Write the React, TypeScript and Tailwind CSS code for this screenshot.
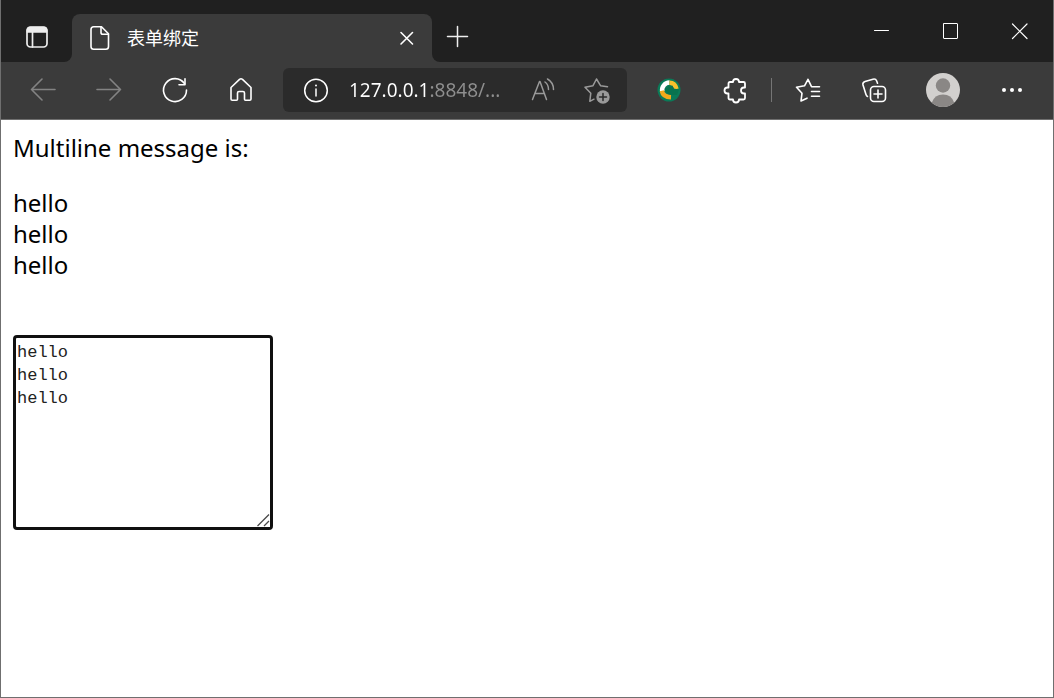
import { useState, type ReactNode } from 'react';

type IconProps = { children: ReactNode; width?: number };

function Icon({ children, width = 1.6 }: IconProps) {
  return (
    <svg
      className="size-7 shrink-0"
      viewBox="0 0 28 28"
      fill="none"
      stroke="currentColor"
      strokeWidth={width}
      strokeLinecap="round"
      strokeLinejoin="round"
      aria-hidden="true"
    >
      {children}
    </svg>
  );
}

type ToolButtonProps = { label: string; dim?: boolean; children: ReactNode };

function ToolButton({ label, dim = false, children }: ToolButtonProps) {
  return (
    <button
      type="button"
      aria-label={label}
      className={`flex h-11 w-[66px] shrink-0 items-center justify-center ${dim ? 'text-[#838383]' : 'text-white'}`}
    >
      {children}
    </button>
  );
}

function WindowButton({ label, children }: { label: string; children: ReactNode }) {
  return (
    <button type="button" aria-label={label} className="flex w-[69px] items-center justify-center text-white">
      {children}
    </button>
  );
}

function TitleBar() {
  return (
    <header className="flex h-[62px] bg-[#3b3b3b]">
      <div className="flex w-[71px] shrink-0 items-center justify-center rounded-br-lg bg-[#202020] pt-3">
        <button type="button" aria-label="Tab actions" className="text-[#eeeeee]">
          <Icon width={1.7}>
            <rect x="4" y="4" width="20" height="20" rx="3.5" />
            <path d="M4.5 9V7Q4.500 4.500 7 4.500H21Q23.500 4.500 23.500 7V9Z" fill="currentColor" />
            <path d="M9.500 9V24" />
          </Icon>
        </button>
      </div>
      <div className="flex min-w-0 shrink basis-[360px] bg-[#202020] pt-[14px]">
        <div className="flex min-w-0 flex-1 items-center rounded-t-lg bg-[#3b3b3b] pr-[11px] pl-[14px]">
          <span className="text-white">
            <Icon>
              <path d="M5 5.500Q5 2.800 7.700 2.800H15.500L22.500 9.800V22.500Q22.500 25.200 19.800 25.200H7.700Q5 25.200 5 22.500Z" />
              <path d="M15 3V8.500Q15 10.300 16.800 10.300H22.300" />
            </Icon>
          </span>
          <span className="ml-[13px] flex-1 truncate text-lg leading-6 text-white">表单绑定</span>
          <button type="button" aria-label="Close tab" className="text-white">
            <Icon>
              <path d="M8 8.500L19.500 20M19.500 8.500L8 20" />
            </Icon>
          </button>
        </div>
      </div>
      <div className="flex flex-1 justify-between rounded-bl-lg bg-[#202020]">
        <button type="button" aria-label="New tab" className="flex items-center pt-3 pl-3 text-[#eeeeee]">
          <Icon width={1.5}>
            <path d="M3.500 13.500H23.500M13.500 3.500V23.500" />
          </Icon>
        </button>
        <div className="flex">
          <WindowButton label="Minimize">
            <Icon width={1}>
              <path d="M7.500 13.500H21.500" />
            </Icon>
          </WindowButton>
          <WindowButton label="Maximize">
            <Icon width={1}>
              <rect x="7.500" y="6.500" width="14" height="15" rx="0.500" />
            </Icon>
          </WindowButton>
          <WindowButton label="Close">
            <Icon width={1.2}>
              <path d="M7.500 7L22 21.500M22 7L7.500 21.500" />
            </Icon>
          </WindowButton>
        </div>
      </div>
    </header>
  );
}

function AddressBar() {
  return (
    <div className="ml-[9px] flex h-11 min-w-0 flex-1 items-center rounded-md bg-[#2b2b2b] pr-4 pl-[19px]">
      <button type="button" aria-label="Site information" className="text-white">
        <Icon width={1.5}>
          <circle cx="14" cy="14.500" r="11.300" />
          <path d="M14 13V20" />
          <circle cx="14" cy="9.500" r="1" fill="currentColor" stroke="none" />
        </Icon>
      </button>
      <input
        aria-label="Address"
        defaultValue="127.0.0.1:8848/..."
        className="ml-[19px] min-w-0 flex-1 bg-[linear-gradient(to_right,#ffffff_80px,#8f8f8f_80px)] bg-clip-text text-[19px] leading-7 text-transparent caret-white outline-none"
      />
      <div className="flex items-center gap-[26px] text-[#9a9a9a]">
        <button type="button" aria-label="Read aloud">
          <Icon width={1.5}>
            <path d="M3.500 23.500L10.500 5.500H11L17.500 23.500M6 17.500H15.500" />
            <path d="M16 6Q19.500 8.500 19.500 13.500M18.500 3Q24.500 6.500 24.500 13.500" />
          </Icon>
        </button>
        <button type="button" aria-label="Add to favorites">
          <Icon width={1.5}>
            <path d="M24.500 10.700L17.500 9.700L13.500 3L10 9.700L2 11.300L7.800 17.200L6.800 25.300L11 23.200" />
            <circle cx="20" cy="21" r="6.700" fill="currentColor" stroke="none" />
            <path d="M20 17.500V24.500M16.500 21H23.500" stroke="#2b2b2b" />
          </Icon>
        </button>
      </div>
    </div>
  );
}

function Toolbar() {
  return (
    <nav aria-label="Browser toolbar" className="flex h-[58px] items-center border-b border-[#6f6f6f] bg-[#3b3b3b] pb-px pl-[9px]">
      <ToolButton label="Back" dim>
        <Icon>
          <path d="M2.500 13.500H26M13 3L2.500 13.500L13 24" />
        </Icon>
      </ToolButton>
      <ToolButton label="Forward" dim>
        <Icon>
          <path d="M2 13.500H25.500M15 3L25.500 13.500L15 24" />
        </Icon>
      </ToolButton>
      <ToolButton label="Refresh">
        <Icon>
          <path d="M25.500 14A11.500 11.500 0 1 1 23.500 7.600" />
          <path d="M24 2.800V8.700H18" />
        </Icon>
      </ToolButton>
      <ToolButton label="Home">
        <Icon>
          <path d="M4 11.500L12.500 3.400Q14 2.200 15.500 3.400L24 11.500V23Q24 24.300 22.700 24.300H18.500Q17.500 24.300 17.500 23.300V17Q17.500 15.500 16 15.500H12Q10.500 15.500 10.500 17V23.300Q10.500 24.300 9.500 24.300H5.300Q4 24.300 4 23Z" />
        </Icon>
      </ToolButton>
      <AddressBar />
      <div className="flex items-center pr-2 pl-[9px]">
        <ToolButton label="Download manager">
          <svg className="size-7" viewBox="0 0 28 28" fill="none" aria-hidden="true">
            <circle cx="14" cy="14" r="11.500" fill="#0a7a58" />
            <path d="M7.300 15.500A7.500 7.500 0 0 1 14.500 6.500" stroke="#ffffff" strokeWidth="4.500" />
            <path d="M14.500 6.800Q20 7 21.500 13" stroke="#f6c02c" strokeWidth="4.500" />
            <path d="M6.800 14.800Q8 21 16 21.300" stroke="#f3a91c" strokeWidth="4.500" />
            <path d="M10 14L10.500 12L12.500 12L13 10L15 11L17.500 9.500L18.500 12.500L24 13.500L22 19L17 19L13 18L11 16Z" fill="#08734f" />
          </svg>
        </ToolButton>
        <ToolButton label="Extensions">
          <Icon width={1.8}>
            <path d="M7.500 7.500Q7.500 6 9 6H12A3 3 0 0 1 18 6H22.500Q24 6 24 7.500V11.500H23A3 3 0 0 0 23 17.500H24V22Q24 23.500 22.500 23.500H18A3 3 0 0 1 12 23.500H9Q7.500 23.500 7.500 22V17.500H6.500A3 3 0 0 1 6.500 11.500H7.500Z" />
          </Icon>
        </ToolButton>
        <span className="mx-[3px] h-6 w-px bg-[#757575]" />
        <ToolButton label="Favorites">
          <Icon>
            <path d="M25.500 10.700H17.500L14 3.300L10.500 9.800L2.500 11.300L8 17.200L7 25L13 22.200" />
            <path d="M17.500 15.500H25.500M17.500 20.300H25.500" />
          </Icon>
        </ToolButton>
        <ToolButton label="Collections">
          <Icon>
            <rect x="10.500" y="10.500" width="15" height="15" rx="3.500" />
            <path d="M18 14V22M14 18H22" />
            <path d="M7.500 20.500Q6.500 20 6 18.500L3 9Q2.300 6.300 5 5.500L13 3.200Q15.700 2.500 16.700 5L17.500 7.200" />
          </Icon>
        </ToolButton>
        <span className="w-[3px]" />
        <ToolButton label="Profile">
          <svg className="size-[34px]" viewBox="0 0 34 34" aria-hidden="true">
            <circle cx="17" cy="17" r="17" fill="#d2d0ce" />
            <circle cx="17" cy="12.500" r="7.200" fill="#8a8785" />
            <path d="M5.800 29.700Q8.500 21.500 17 21.500Q25.500 21.500 28.200 29.700A17 17 0 0 1 5.800 29.700Z" fill="#8a8785" />
          </svg>
        </ToolButton>
        <span className="w-[3px]" />
        <ToolButton label="Settings and more">
          <Icon>
            <g fill="currentColor" stroke="none">
              <circle cx="6" cy="14" r="2" />
              <circle cx="14" cy="14" r="2" />
              <circle cx="22" cy="14" r="2" />
            </g>
          </Icon>
        </ToolButton>
      </div>
    </nav>
  );
}

export default function App() {
  const [message, setMessage] = useState('hello\nhello\nhello');

  return (
    <div className="flex min-h-screen flex-col border-x border-b border-[#6f6f6f] bg-white font-['Noto_Sans','Noto_Sans_CJK_SC',sans-serif]">
      <TitleBar />
      <Toolbar />
      <main className="flex-1 px-3 pt-3 text-2xl leading-[31px] text-black">
        <label htmlFor="message">Multiline message is:</label>
        <p className="mt-6 whitespace-pre-line">{message}</p>
        <div className="relative mt-[55px] w-fit">
          <textarea
            id="message"
            value={message}
            onChange={(event) => setMessage(event.target.value)}
            className="block h-[195px] w-[260px] resize rounded-sm border-3 border-[#101010] px-px py-[3px] font-['Liberation_Mono',monospace] text-[17px] leading-[23px] text-[#222222] outline-none [&::-webkit-resizer]:bg-white"
          />
          <svg
            className="pointer-events-none absolute right-[3px] bottom-[3px] size-[13px]"
            viewBox="0 0 13 13"
            fill="none"
            stroke="#4a4a4a"
            strokeWidth="1.3"
            aria-hidden="true"
          >
            <path d="M0.500 12L12 0.500M7 12L12 7" />
          </svg>
        </div>
      </main>
    </div>
  );
}
